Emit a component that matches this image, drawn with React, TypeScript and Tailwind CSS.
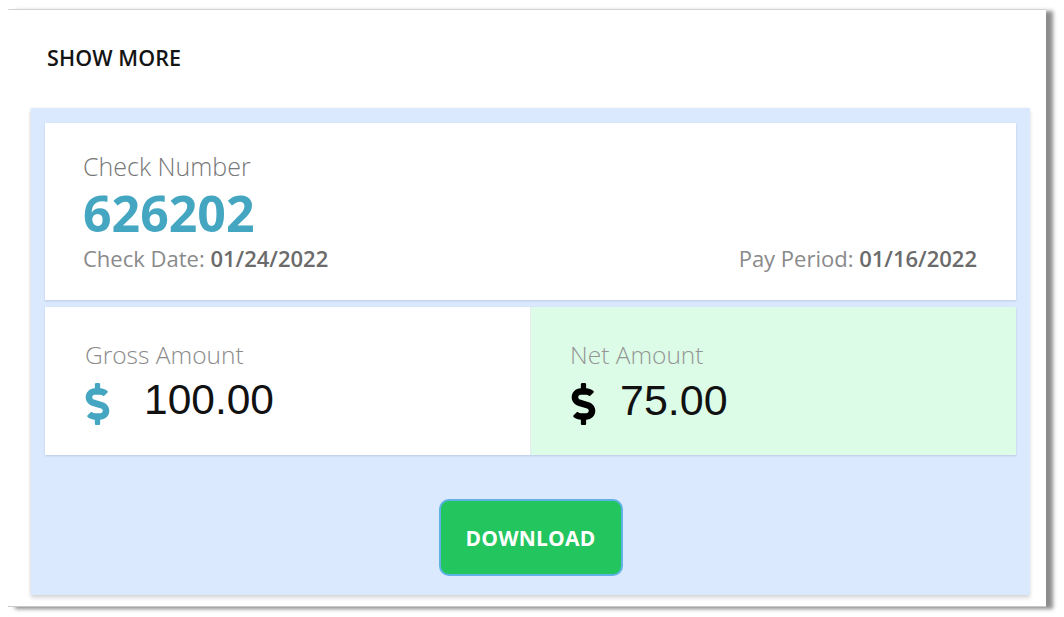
import React from "react";
import { FaDollarSign } from "react-icons/fa";

export default function App() {
  return (
    <div className="w-[1064px] h-[617px] bg-white overflow-hidden" style={{ fontFamily: '"Open Sans", "Liberation Sans", sans-serif' }}>
      <div className="ml-[8px] mt-[9px] w-[1038px] h-[598px] bg-white border-t border-[#d4d4d4] border-b border-b-[#c8c8c8] shadow-[7px_2px_4px_rgba(0,0,0,0.45)] flex flex-col">
        <div className="pl-[39px] pt-[33px] h-[98px]">
          <span className="text-[21.5px] leading-[30px] font-semibold text-[#141414] tracking-[0.1px]">SHOW MORE</span>
        </div>
        <div className="ml-[23px] w-[999px] h-[487px] bg-[#dbe9fe] shadow-[0_3px_4px_rgba(0,0,0,0.15),-1px_0_3px_rgba(0,0,0,0.06)] px-[14px] pt-[15px] flex flex-col">
          <div className="bg-white h-[177px] px-[38px] pt-[28px] shadow-[0_1px_2px_rgba(120,140,180,0.35)] flex flex-col">
            <div className="text-[25px] leading-[30px] font-light text-[#777]">Check Number</div>
            <div className="mt-[4px] text-[50px] leading-[56px] font-bold text-[#44a6c1]">626202</div>
            <div className="mt-[4px] flex justify-between text-[22px] leading-[26px] text-[#8a8a8a]">
              <span>Check Date: <span className="font-semibold text-[#6b6b6b]">01/24/2022</span></span>
              <span className="mr-[1px]">Pay Period: <span className="font-semibold text-[#6b6b6b]">01/16/2022</span></span>
            </div>
          </div>
          <div className="mt-[7px] h-[148px] flex shadow-[0_1px_2px_rgba(120,140,180,0.35)]">
            <div className="w-[486px] bg-white pl-[40px] pt-[33px] border-r border-[#e6ecef]">
              <div className="text-[24.5px] leading-[30px] font-light text-[#8a8a8a]">Gross Amount</div>
              <div className="mt-[6px] flex items-center h-[48px]">
                <FaDollarSign className="text-[#44a6c1] w-[25px] h-[42px] mt-[7px]" />
                <span className="ml-[34px] text-[42.5px] leading-[48px] text-[#111]" style={{ fontFamily: '"Liberation Sans", Arial, sans-serif' }}>100.00</span>
              </div>
            </div>
            <div className="flex-1 bg-[#dcfce7] pl-[39px] pt-[33px]">
              <div className="text-[24.5px] leading-[30px] font-light text-[#959595]">Net Amount</div>
              <div className="mt-[6px] flex items-center h-[48px]">
                <FaDollarSign className="text-[#000] w-[25px] h-[42px] mt-[7px] ml-[1px]" />
                <span className="ml-[24px] text-[43px] leading-[48px] text-[#111]" style={{ fontFamily: '"Liberation Sans", Arial, sans-serif' }}>75.00</span>
              </div>
            </div>
          </div>
          <div className="flex justify-center mt-[44px]">
            <button className="w-[184px] h-[77px] rounded-[10px] bg-[#22c55e] border-2 border-[#5eb3e4] text-white text-[21px] font-bold tracking-[0.2px] flex items-center justify-center pt-[2px]">
              DOWNLOAD
            </button>
          </div>
        </div>
      </div>
    </div>
  );
}
